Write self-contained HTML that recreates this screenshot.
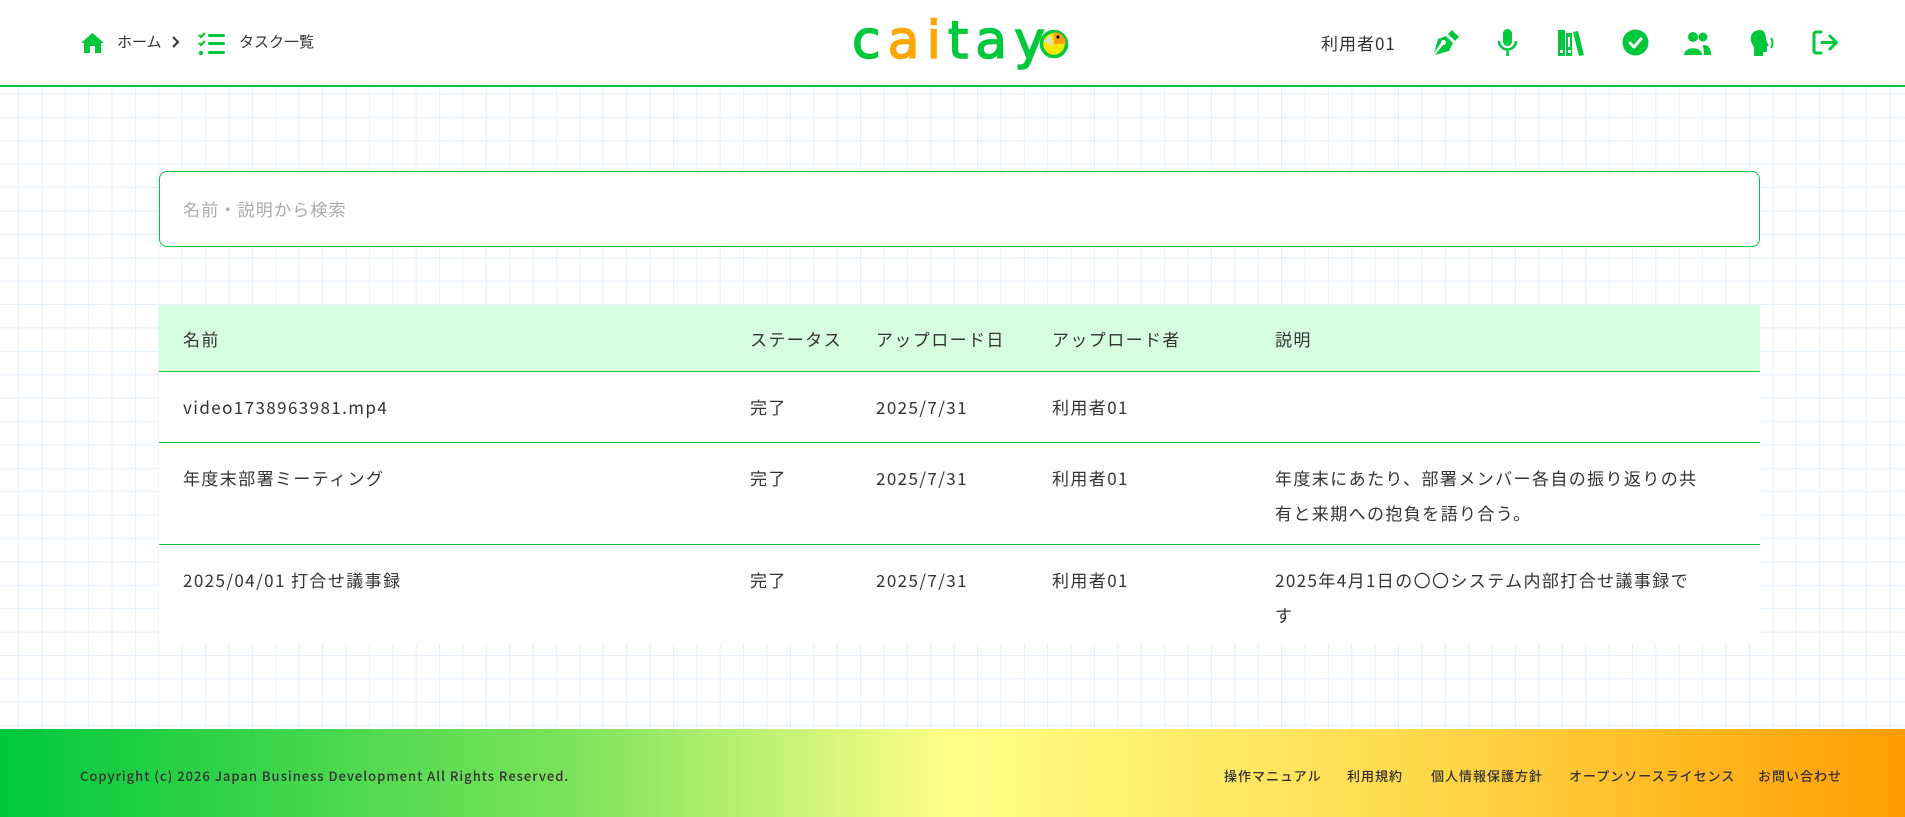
<!DOCTYPE html>
<html><head><meta charset="utf-8">
<style>
*{margin:0;padding:0;box-sizing:border-box}
html,body{width:1905px;height:817px;overflow:hidden}
body{font-family:"Noto Sans CJK JP","Liberation Sans",sans-serif;color:#333;position:relative;
background-color:#fff;
background-image:linear-gradient(to right,#e4effc 1px,transparent 1px),linear-gradient(to bottom,#e4effc 1px,transparent 1px);
background-size:23.4px 23.4px;background-position:18px 0}
.hdr{position:absolute;left:0;top:0;width:1905px;height:87px;background:#fff;border-bottom:2px solid #00c83c}
.abs{position:absolute}
.crumb{font-size:15px;color:#333;top:31px;line-height:22px}
.logo{left:852px;top:6px;font-family:"DejaVu Sans","Liberation Sans",sans-serif;font-size:52px;color:#00c83c;letter-spacing:7px;line-height:70px;font-weight:normal;-webkit-text-stroke:1.5px currentColor}
.uname{left:1321px;top:30px;font-size:17px;letter-spacing:1px;color:#333;line-height:26px}
.ico{position:absolute;top:28px;width:29px;height:29px}
.search{position:absolute;left:159px;top:171px;width:1601px;height:76px;border:1.5px solid #00c83c;border-radius:8px;background:#fff}
.search span{position:absolute;left:23px;top:24px;font-size:17px;color:#aaa;letter-spacing:1.2px;line-height:26px}
.tbl{position:absolute;left:159px;top:305px;width:1601px;background:#fff}
.row{position:relative;border-bottom:1.5px solid #17c03f;font-size:17px;letter-spacing:1.4px;line-height:35px}
.row div{position:absolute}
.th{height:67px;background:#d7fde0}
.th div{top:16px}
.r1{height:71px}.r2{height:102px}.r3{height:99px;border-bottom:none}
.r1 div,.r2 div,.r3 div{top:17px}
.c1{left:24px}.c2{left:591px}.c3{left:717px}.c4{left:893px}.c5{left:1116px;width:460px}
.ftr{position:absolute;left:0;top:729px;width:1905px;height:88px;background:linear-gradient(to right,#00c83c 0%,#7de35c 30%,#ffff88 50%,#ffd84a 75%,#ff9d00 100%)}
.ftr .t{position:absolute;top:37px;font-size:13px;color:#333;letter-spacing:1px;font-weight:500;line-height:20px}
</style></head><body>
<div class="hdr">
 <svg class="abs" style="left:80px;top:32px" width="25" height="22" viewBox="0 0 25 22"><path d="M12.5 1 L1 11 H4 V21 H10 V14 H15 V21 H21 V11 H24 Z" fill="#00c83c"/></svg>
 <div class="abs crumb" style="left:117px">ホーム</div>
 <svg class="abs" style="left:171px;top:35px" width="10" height="14" viewBox="0 0 10 14"><path d="M2 2 L7 7 L2 12" stroke="#333" stroke-width="2" fill="none"/></svg>
 <svg class="abs" style="left:198px;top:32px" width="28" height="25" viewBox="0 0 28 25"><path d="M1 3 L3 5 L7 1 M1 11 L3 13 L7 9" stroke="#00c83c" stroke-width="2.2" fill="none"/><circle cx="3" cy="21" r="2.2" fill="#00c83c"/><rect x="10" y="2" width="17" height="3" rx="1.5" fill="#00c83c"/><rect x="10" y="10" width="17" height="3" rx="1.5" fill="#00c83c"/><rect x="10" y="19" width="17" height="3" rx="1.5" fill="#00c83c"/></svg>
 <div class="abs crumb" style="left:239px">タスク一覧</div>
 <div class="abs logo"><span>c</span><span style="color:#ffa500">ai</span><span>tay</span></div>
 <svg class="abs" style="left:1039px;top:29px" width="30" height="30" viewBox="0 0 30 30"><circle cx="15" cy="15" r="12.5" fill="#ffe600" stroke="#00c83c" stroke-width="3.5"/><path d="M15 3 A12 12 0 0 1 27 15 L15 15Z" fill="#ff9d00"/><path d="M5 12 L12 6 L14 17 Z" fill="#ddd"/><circle cx="19" cy="8" r="1.5" fill="#000"/></svg>
 <div class="abs uname">利用者01</div>
 <svg class="ico" style="left:1432px" viewBox="0 0 29 29"><path d="M20 2 L27 9 L23 13 L16 6 Z M14 8 L21 15 L17 23 L3 27 L11 17 A2.5 2.5 0 1 0 9 15 L2 25 L6 11 Z" fill="#00c83c"/></svg>
 <svg class="ico" style="left:1493px" viewBox="0 0 29 29"><rect x="10" y="1" width="9" height="17" rx="4.5" fill="#00c83c"/><path d="M6 13 A8.5 8.5 0 0 0 23 13" stroke="#00c83c" stroke-width="2.5" fill="none"/><path d="M14.5 21 V28" stroke="#00c83c" stroke-width="2.5"/></svg>
 <svg class="ico" style="left:1557px" viewBox="0 0 29 29"><path d="M1 2 H8 V28 H1 Z M9 5 H15 V28 H9 Z M16 4 L21 3 L27 27 L22 28 Z" fill="#00c83c"/><rect x="3" y="22" width="3" height="3" fill="#fff"/><rect x="11" y="22" width="3" height="3" fill="#fff"/><rect x="11" y="9" width="2" height="10" fill="#fff"/></svg>
 <svg class="ico" style="left:1621px" viewBox="0 0 29 29"><circle cx="14.5" cy="14.5" r="13" fill="#00c83c"/><path d="M9 15 L13 19 L20 11" stroke="#fff" stroke-width="3" fill="none" stroke-linecap="round" stroke-linejoin="round"/></svg>
 <svg class="ico" style="left:1683px" viewBox="0 0 29 29"><circle cx="10" cy="9" r="5" fill="#00c83c"/><circle cx="20" cy="9" r="4.5" fill="#00c83c"/><path d="M1 27 C1 18 19 18 19 27 Z" fill="#00c83c"/><path d="M20 17 C27 17 28 22 28 27 H21 C21 22 20 19 20 17Z" fill="#00c83c"/></svg>
 <svg class="ico" style="left:1748px" viewBox="0 0 29 29"><path d="M12 2 C4 2 2 8 3 13 C4 17 6 18 6 20 V28 H15 V24 H18 C19 24 19 22 19 21 V18 H21 L18 12 C18 6 16 2 12 2Z" fill="#00c83c"/><path d="M23 10 C25 13 25 17 23 20" stroke="#00c83c" stroke-width="2" fill="none"/></svg>
 <svg class="ico" style="left:1811px" viewBox="0 0 29 29"><path d="M10 4 H5 A2 2 0 0 0 3 6 V23 A2 2 0 0 0 5 25 H10" stroke="#00c83c" stroke-width="3" fill="none" stroke-linecap="round"/><path d="M11 14.5 H25 M19 8 L25.5 14.5 L19 21" stroke="#00c83c" stroke-width="3" fill="none" stroke-linecap="round" stroke-linejoin="round"/></svg>
</div>
<div class="search"><span>名前・説明から検索</span></div>
<div class="tbl">
 <div class="row th"><div class="c1">名前</div><div class="c2">ステータス</div><div class="c3">アップロード日</div><div class="c4">アップロード者</div><div class="c5">説明</div></div>
 <div class="row r1"><div class="c1">video1738963981.mp4</div><div class="c2">完了</div><div class="c3">2025/7/31</div><div class="c4">利用者01</div></div>
 <div class="row r2"><div class="c1">年度末部署ミーティング</div><div class="c2">完了</div><div class="c3">2025/7/31</div><div class="c4">利用者01</div><div class="c5">年度末にあたり、部署メンバー各自の振り返りの共<br>有と来期への抱負を語り合う。</div></div>
 <div class="row r3"><div class="c1">2025/04/01 打合せ議事録</div><div class="c2">完了</div><div class="c3">2025/7/31</div><div class="c4">利用者01</div><div class="c5">2025年4月1日の〇〇システム内部打合せ議事録で<br>す</div></div>
</div>
<div class="ftr">
 <div class="t" style="left:80px">Copyright (c) 2026 Japan Business Development All Rights Reserved.</div>
 <div class="t" style="left:1224px">操作マニュアル</div>
 <div class="t" style="left:1347px">利用規約</div>
 <div class="t" style="left:1431px">個人情報保護方針</div>
 <div class="t" style="left:1569px">オープンソースライセンス</div>
 <div class="t" style="left:1758px">お問い合わせ</div>
</div>
</body></html>
